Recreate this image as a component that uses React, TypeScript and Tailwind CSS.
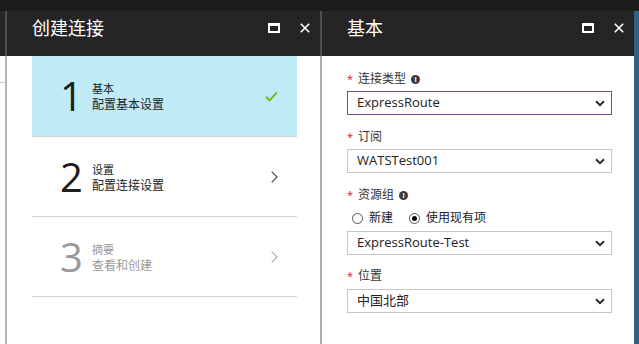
import React from 'react';

const FONT = "font-['Open_Sans','Noto_Sans_CJK_SC',sans-serif]";

function MaxIcon() {
  return <div className="w-[12px] h-[10px] border-2 border-t-[3px] border-white" />;
}

function CloseIcon() {
  return (
    <svg width="10" height="10" viewBox="0 0 10 10">
      <path d="M0.8 0.8 L9.2 9.2 M9.2 0.8 L0.8 9.2" stroke="#fff" strokeWidth="1.6" />
    </svg>
  );
}

function BladeHeader({title}: {title: string}) {
  return (
    <div className="h-[45px] bg-[#252525]">
      <div className="h-[33px] flex items-center pl-[25px] pr-[10px]">
        <div className="flex-1 text-white text-[18px] leading-none">{title}</div>
        <MaxIcon />
        <div className="w-[20px]" />
        <CloseIcon />
      </div>
    </div>
  );
}

function Check() {
  return (
    <svg width="13" height="11" viewBox="0 0 13 11">
      <path d="M1 5.8 L4.6 9.4 L12 1.4" stroke="#7cb518" strokeWidth="2" fill="none" />
    </svg>
  );
}

function Chevron({color}: {color: string}) {
  return (
    <svg width="7" height="12" viewBox="0 0 7 12">
      <path d="M0.7 0.7 L6 6 L0.7 11.3" stroke={color} strokeWidth="1.1" fill="none" />
    </svg>
  );
}

type Step = {n: string; title: string; desc: string; state: 'done' | 'active' | 'disabled'};

const steps: Step[] = [
  {n: '1', title: '基本', desc: '配置基本设置', state: 'done'},
  {n: '2', title: '设置', desc: '配置连接设置', state: 'active'},
  {n: '3', title: '摘要', desc: '查看和创建', state: 'disabled'},
];

function StepRow({step}: {step: Step}) {
  const dim = step.state === 'disabled';
  return (
    <div
      className={`flex items-center pl-[28px] pr-[19px] border-b border-[#d4d4d4] ${
        step.state === 'done' ? 'bg-[#bfeaf6] h-[81px]' : 'h-[80px]'
      }`}
    >
      <div className={`w-[32px] text-[40px] leading-none ${dim ? 'text-[#9a9a9a]' : 'text-[#1e1e1e]'}`}>
        {step.n}
      </div>
      <div className={`flex-1 flex flex-col pt-[2px] ${dim ? 'text-[#9a9a9a]' : 'text-[#222]'}`}>
        <div className="text-[11px] leading-[16px]">{step.title}</div>
        <div className="text-[12px] leading-[16px]">{step.desc}</div>
      </div>
      {step.state === 'done' ? <Check /> : <Chevron color={dim ? '#aaaaaa' : '#444444'} />}
    </div>
  );
}

function Info() {
  return (
    <span className="ml-[5px] inline-flex w-[9px] h-[9px] rounded-full bg-[#3a3a3a] text-white text-[7px] font-bold leading-none items-center justify-center">
      i
    </span>
  );
}

function Label({text, info}: {text: string; info?: boolean}) {
  return (
    <div className="h-[16px] flex items-center text-[12px] text-[#333]">
      <span className="text-[#e0102a] text-[11px] mr-[5px]">*</span>
      <span>{text}</span>
      {info && <Info />}
    </div>
  );
}

function Select({value, focused}: {value: string; focused?: boolean}) {
  return (
    <div
      className={`h-[24px] flex items-center pl-[9px] pr-[6px] border bg-white ${
        focused ? 'border-[#7a4f86]' : 'border-[#c6c6c6]'
      }`}
    >
      <div className="flex-1 text-[13px] text-[#222]">{value}</div>
      <svg width="10" height="7" viewBox="0 0 10 7">
        <path d="M1 1.2 L5 5.2 L9 1.2" stroke="#2a2a2a" strokeWidth="2" fill="none" />
      </svg>
    </div>
  );
}

function Radio({label, checked}: {label: string; checked?: boolean}) {
  return (
    <div className="flex items-center text-[12px] text-[#222]">
      <span className="w-[11px] h-[11px] rounded-full border border-[#555] flex items-center justify-center">
        {checked && <span className="w-[5px] h-[5px] rounded-full bg-black" />}
      </span>
      <span className="ml-[6px]">{label}</span>
    </div>
  );
}

export default function App() {
  return (
    <div className={`w-[639px] h-[344px] overflow-hidden bg-white flex flex-col ${FONT}`}>
      <div className="h-[11px] bg-[#1c1c1c]" />
      <div className="flex-1 flex">
        <div className="w-[5px] flex flex-col">
          <div className="h-[45px] bg-[#252525]" />
          <div className="flex-1 pt-[26px]">
            <div className="h-px bg-[#c8c8c8]" />
          </div>
        </div>
        <div className="w-[2px] flex flex-col">
          <div className="h-[45px] bg-[#4d4d4d]" />
          <div className="flex-1 bg-[#b4b4b4]" />
        </div>

        <div className="w-[313px] flex flex-col">
          <BladeHeader title="创建连接" />
          <div className="ml-[25px] mr-[23px]">
            {steps.map((s) => (
              <StepRow key={s.n} step={s} />
            ))}
          </div>
        </div>

        <div className="w-[2px] flex flex-col">
          <div className="h-[45px] bg-[#4d4d4d]" />
          <div className="flex-1 bg-[#adadad]" />
        </div>

        <div className="w-[312px] flex flex-col">
          <BladeHeader title="基本" />
          <div className="pl-[25px] pr-[22px] pt-[15px] flex flex-col">
            <Label text="连接类型" info />
            <div className="h-[4px]" />
            <Select value="ExpressRoute" focused />
            <div className="h-[14px]" />
            <Label text="订阅" />
            <div className="h-[4px]" />
            <Select value="WATSTest001" />
            <div className="h-[14px]" />
            <Label text="资源组" info />
            <div className="h-[7px]" />
            <div className="h-[16px] flex items-center pl-[5px] gap-[16px]">
              <Radio label="新建" />
              <Radio label="使用现有项" checked />
            </div>
            <div className="h-[5px]" />
            <Select value="ExpressRoute-Test" />
            <div className="h-[13px]" />
            <Label text="位置" />
            <div className="h-[5px]" />
            <Select value="中国北部" />
          </div>
        </div>

        <div className="w-[5px] bg-[#2e6184]" />
      </div>
    </div>
  );
}
